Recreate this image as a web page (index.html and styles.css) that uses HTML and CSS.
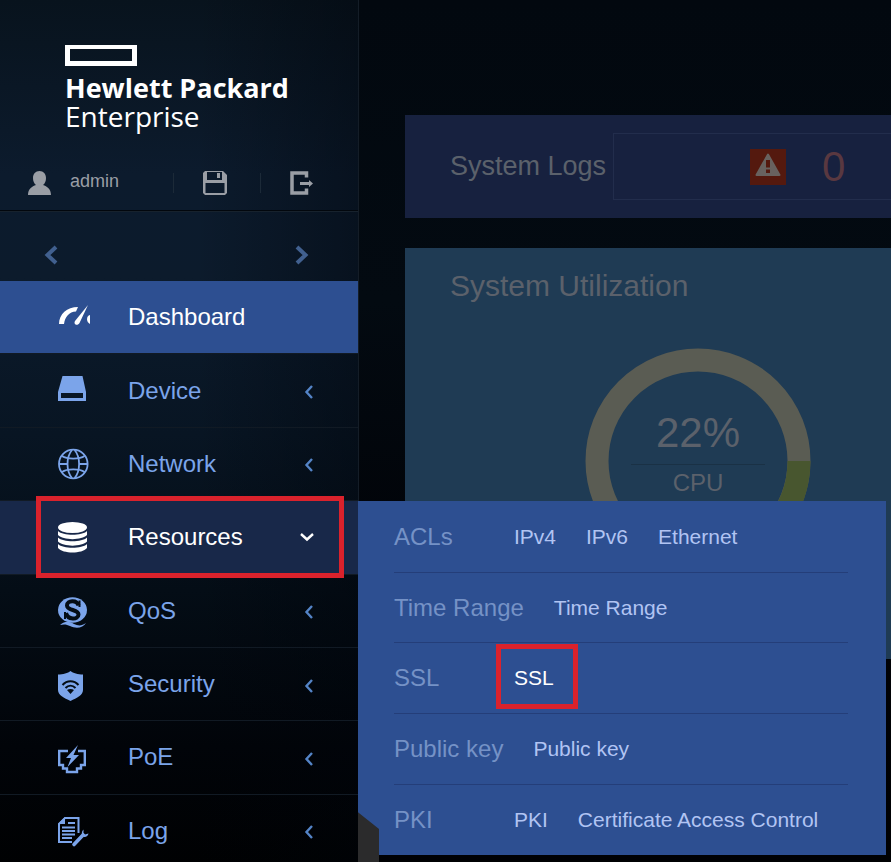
FILE: index.html
```html
<!DOCTYPE html>
<html lang="en">
<head>
    <meta charset="UTF-8">
    <meta name="viewport" content="width=device-width, initial-scale=1.0">
    <title>Hewlett Packard Enterprise</title>
    <link rel="stylesheet" href="styles.css">
</head>
<body>
    <div class="shell">
        <aside class="sidebar">
            <header class="sidebar-header">
                <div class="logo">
                    <div class="logo-box"></div>
                    <div class="logo-name">Hewlett Packard</div>
                    <div class="logo-sub">Enterprise</div>
                </div>
                <div class="user-bar">
                    <svg class="user-icon" viewBox="0 0 24 24">
                        <path d="M11.500 0C15.500 0 18 3 18 7C18 10 17 12.500 15 14C19 15.500 23 18 23 24H0C0 18 4 15.500 8 14C6 12.500 5 10 5 7C5 3 7.500 0 11.500 0Z" fill="currentColor"/>
                    </svg>
                    <span class="user-name">admin</span>
                    <button class="tool" type="button" aria-label="Save">
                        <svg viewBox="0 0 24 24">
                            <path fill-rule="evenodd" d="M2 0H20L24 4V22L22 24H2L0 22V2ZM4 1V9H19V1ZM14 2H17V7H14ZM2.500 12V22H21.500V12Z" fill="currentColor"/>
                        </svg>
                    </button>
                    <button class="tool" type="button" aria-label="Log out">
                        <svg viewBox="0 0 24 24">
                            <path d="M16.500 6.500V2H2V22H16.500V17.500" fill="none" stroke="currentColor" stroke-width="3.500"/>
                            <path d="M10 11H19V9L23 12.500L19 16V14H10Z" fill="currentColor"/>
                        </svg>
                    </button>
                </div>
            </header>

            <div class="pager">
                <button class="pager-btn" type="button" aria-label="Previous">
                    <svg viewBox="0 0 14 20"><path d="M12 2L3.500 10L12 18" fill="none" stroke="currentColor" stroke-width="4"/></svg>
                </button>
                <button class="pager-btn" type="button" aria-label="Next">
                    <svg viewBox="0 0 14 20"><path d="M2 2L10.500 10L2 18" fill="none" stroke="currentColor" stroke-width="4"/></svg>
                </button>
            </div>

            <nav>
                <ul class="menu">
                    <li class="menu-item active">
                        <a class="menu-link" href="#">
                            <svg class="menu-icon" viewBox="0 0 32 32">
                                <path d="M1 23C1 13 9 6 20 6L18 10.500C11 11 7 15.500 6 23Z" fill="currentColor"/>
                                <path d="M30 4L21.500 22C20 25 15 24 17 20Z" fill="currentColor"/>
                                <path d="M32 14C28 15 28 21 32 23Z" fill="currentColor"/>
                            </svg>
                            <span class="menu-label">Dashboard</span>
                        </a>
                    </li>
                    <li class="menu-item">
                        <a class="menu-link" href="#">
                            <svg class="menu-icon" viewBox="0 0 32 32">
                                <path fill-rule="evenodd" d="M4.500 1H24.500L28 17V26H0V17ZM3 18V23H25V18Z" fill="currentColor"/>
                            </svg>
                            <span class="menu-label">Device</span>
                            <svg class="menu-arrow" viewBox="0 0 14 14"><path d="M12 1L6.500 7L12 13" fill="none" stroke="currentColor" stroke-width="2.400"/></svg>
                        </a>
                    </li>
                    <li class="menu-item">
                        <a class="menu-link" href="#">
                            <svg class="menu-icon" viewBox="0 0 32 32">
                                <g fill="none" stroke="currentColor" stroke-width="1.800">
                                    <circle cx="15.300" cy="16" r="14.300"/>
                                    <path d="M14 2C8 9 8 23 14 30M16.600 2C22.600 9 22.600 23 16.600 30"/>
                                    <path d="M4 8C9 11.500 21.600 11.500 26.600 8M4 24C9 20.500 21.600 20.500 26.600 24M1 16H9.500M21 16H29.600"/>
                                </g>
                            </svg>
                            <span class="menu-label">Network</span>
                            <svg class="menu-arrow" viewBox="0 0 14 14"><path d="M12 1L6.500 7L12 13" fill="none" stroke="currentColor" stroke-width="2.400"/></svg>
                        </a>
                    </li>
                    <li class="menu-item open marked">
                        <a class="menu-link" href="#">
                            <svg class="menu-icon" viewBox="0 0 32 32">
                                <ellipse cx="14.500" cy="6.500" rx="14.500" ry="5.500" fill="currentColor"/>
                                <path d="M0 10C5 15 24 15 29 10V14C24 19.500 5 19.500 0 14ZM0 16.500C5 21.500 24 21.500 29 16.500V20.500C24 26 5 26 0 20.500ZM0 23C5 28 24 28 29 23V27C24 33 5 33 0 27Z" fill="currentColor"/>
                            </svg>
                            <span class="menu-label">Resources</span>
                            <svg class="menu-arrow" viewBox="0 0 14 14"><path d="M1 4L7 9.500L13 4" fill="none" stroke="currentColor" stroke-width="2.400"/></svg>
                        </a>
                        <div class="flyout">
                            <div class="flyout-row">
                                <span class="flyout-title">ACLs</span>
                                <a class="flyout-link" href="#">IPv4</a>
                                <a class="flyout-link" href="#">IPv6</a>
                                <a class="flyout-link" href="#">Ethernet</a>
                            </div>
                            <div class="flyout-row">
                                <span class="flyout-title">Time Range</span>
                                <a class="flyout-link" href="#">Time Range</a>
                            </div>
                            <div class="flyout-row">
                                <span class="flyout-title">SSL</span>
                                <a class="flyout-link current" href="#">SSL</a>
                            </div>
                            <div class="flyout-row">
                                <span class="flyout-title">Public key</span>
                                <a class="flyout-link" href="#">Public key</a>
                            </div>
                            <div class="flyout-row">
                                <span class="flyout-title">PKI</span>
                                <a class="flyout-link" href="#">PKI</a>
                                <a class="flyout-link" href="#">Certificate Access Control</a>
                            </div>
                        </div>
                    </li>
                    <li class="menu-item">
                        <a class="menu-link" href="#">
                            <svg class="menu-icon" viewBox="0 0 32 32">
                                <ellipse cx="14.500" cy="15" rx="14.500" ry="12.800" fill="currentColor"/>
                                <path d="M2 30C7 26 11 26 16 29C20 31 24 31 28 28C25 33 18 34 12 31C9 29.500 6 29 2 30Z" fill="currentColor"/>
                                <path d="M20.500 10.500C19 4.500 9 5 9 10.500C9 16 20.500 14 20.500 19.500C20.500 25 9.500 25 8 18" fill="none" stroke="#040d16" stroke-width="4"/>
                                <path d="M20.500 5.500H22.500V12H20.500ZM6 17H8V24H6Z" fill="#040d16"/>
                            </svg>
                            <span class="menu-label">QoS</span>
                            <svg class="menu-arrow" viewBox="0 0 14 14"><path d="M12 1L6.500 7L12 13" fill="none" stroke="currentColor" stroke-width="2.400"/></svg>
                        </a>
                    </li>
                    <li class="menu-item">
                        <a class="menu-link" href="#">
                            <svg class="menu-icon" viewBox="0 0 32 32">
                                <path d="M12.500 3C15 5 20 6.500 25 6.500V22C25 27 19 30 12.500 33C6 30 0 27 0 22V6.500C5 6.500 10 5 12.500 3Z" fill="currentColor"/>
                                <path d="M4.500 17C9 12 16 12 20.500 17M7.500 20C10.500 17 14.500 17 17.500 20" fill="none" stroke="#040d16" stroke-width="2"/>
                                <path d="M9 22C11 20.500 14 20.500 16 22L12.500 26Z" fill="#040d16"/>
                            </svg>
                            <span class="menu-label">Security</span>
                            <svg class="menu-arrow" viewBox="0 0 14 14"><path d="M12 1L6.500 7L12 13" fill="none" stroke="currentColor" stroke-width="2.400"/></svg>
                        </a>
                    </li>
                    <li class="menu-item">
                        <a class="menu-link" href="#">
                            <svg class="menu-icon" viewBox="0 0 32 32">
                                <path d="M10 10H1.200V24H5V27.500H9V31H19V27.500H23V24H26.800V10H20" fill="none" stroke="currentColor" stroke-width="2.400"/>
                                <path d="M20 4L8 17H13L9.500 26L21 14H15.500Z" fill="currentColor"/>
                            </svg>
                            <span class="menu-label">PoE</span>
                            <svg class="menu-arrow" viewBox="0 0 14 14"><path d="M12 1L6.500 7L12 13" fill="none" stroke="currentColor" stroke-width="2.400"/></svg>
                        </a>
                    </li>
                    <li class="menu-item">
                        <a class="menu-link" href="#">
                            <svg class="menu-icon" viewBox="0 0 32 32">
                                <path d="M20.500 18V3H7L1 9V27H14" fill="none" stroke="currentColor" stroke-width="2"/>
                                <path d="M7 2V9H0Z" fill="currentColor"/>
                                <path d="M10 8H17M4 12.500H17M4 16H17M4 19.500H17M4 23H14" stroke="currentColor" stroke-width="1.800"/>
                                <path d="M16 29.500L25 20" stroke="currentColor" stroke-width="3.600" stroke-linecap="round"/>
                                <path d="M25.500 14.500C23 17 23.500 21 26 22C28 22.500 30 21 30.500 18.500L27 19.500L25.500 18Z" fill="currentColor"/>
                            </svg>
                            <span class="menu-label">Log</span>
                            <svg class="menu-arrow" viewBox="0 0 14 14"><path d="M12 1L6.500 7L12 13" fill="none" stroke="currentColor" stroke-width="2.400"/></svg>
                        </a>
                    </li>
                </ul>
            </nav>
        </aside>

        <main class="content">
            <section class="card logs">
                <h2 class="logs-title">System Logs</h2>
                <div class="logs-box">
                    <svg class="alert-icon" viewBox="0 0 36 36">
                        <rect width="36" height="36" fill="#54190e"/>
                        <path d="M18 5.500L29.500 26H6.500Z" fill="#68625f" stroke="#68625f" stroke-width="2" stroke-linejoin="round"/>
                        <path d="M16 11H20V18.500H16ZM16 20.500H20V24H16Z" fill="#54190e"/>
                    </svg>
                    <span class="logs-count">0</span>
                </div>
            </section>
            <section class="card utilization">
                <h2 class="utilization-title">System Utilization</h2>
                <div class="gauge">
                    <svg class="gauge-ring" viewBox="0 0 226 226">
                        <circle cx="113" cy="113" r="101" fill="none" stroke="#5a5c53" stroke-width="23"/>
                        <circle cx="113" cy="113" r="101" fill="none" stroke="#48562f" stroke-width="23" pathLength="100" stroke-dasharray="22 78"/>
                    </svg>
                    <div class="gauge-text">
                        <span class="gauge-value">22%</span>
                        <span class="gauge-name">CPU</span>
                    </div>
                </div>
            </section>
        </main>
    </div>
</body>
</html>
```
FILE: styles.css
```css
* {
    box-sizing: border-box;
}
body {
    margin: 0;
    font-family: "Liberation Sans", Arial, sans-serif;
    background-color: #010409;
    overflow: hidden;
}
a {
    text-decoration: none;
}
button {
    padding: 0;
    border: none;
    background: none;
    cursor: pointer;
}
h2 {
    margin: 0;
    font-weight: normal;
}
svg {
    display: block;
    overflow: visible;
}
.shell {
    display: flex;
    height: 100vh;
    background: linear-gradient(180deg, #02080f 0%, #030a11 35%, #010308 65%, #000103 100%);
}

/* sidebar */
.sidebar {
    position: relative;
    z-index: 1;
    flex: 0 0 359px;
    min-height: 868px;
    border-right: 1px solid #141d27;
    background: linear-gradient(90deg, transparent 55%, rgba(0, 4, 10, 0.4) 100%),
        linear-gradient(180deg, #08131d 0%, #0c1b2d 20%, #0c1b2c 32%, #081523 50%, #040d16 68%, #010409 86%, #000102 100%);
}
.sidebar-header {
    height: 212px;
    padding-top: 45px;
    border-bottom: 1px solid #17222d;
    box-shadow: inset 0 -1px 0 #02070d;
}
.logo {
    height: 126px;
    padding-left: 65px;
    color: #ffffff;
    font-family: "Open Sans", "Noto Sans", sans-serif;
    line-height: 29px;
    white-space: nowrap;
}
.logo-box {
    width: 72px;
    height: 21px;
    margin-bottom: 7px;
    border: 5px solid #ffffff;
    border-top-width: 4px;
}
.logo-name {
    font-size: 27px;
    font-weight: 700;
}
.logo-sub {
    font-size: 28px;
    font-weight: 500;
}
.user-bar {
    display: flex;
    align-items: center;
    height: 24px;
    padding-left: 28px;
    color: #9a9ea5;
}
.user-icon {
    width: 24px;
    height: 24px;
    margin-right: 18px;
}
.user-name {
    width: 103px;
    padding-bottom: 4px;
    font-size: 18px;
    line-height: 20px;
}
.tool {
    display: flex;
    align-items: center;
    width: 87px;
    height: 20px;
    padding-left: 29px;
    border-left: 1px solid #1c2a38;
    color: #9a9ea5;
}
.tool svg {
    width: 24px;
    height: 24px;
}
.pager {
    display: flex;
    justify-content: space-between;
    align-items: center;
    height: 69px;
    padding: 16px 49px 0 44px;
}
.pager-btn {
    width: 14px;
    height: 20px;
    color: #41608f;
}
.menu {
    display: grid;
    grid-auto-rows: 1fr;
    min-height: 587px;
    margin: 0;
    padding: 0;
    list-style: none;
}
.menu-item {
    position: relative;
    border-bottom: 1px solid #111a24;
}
.menu-link {
    display: flex;
    align-items: center;
    height: 100%;
    padding: 0 44px 0 58px;
    color: #7ba4ea;
    font-size: 24px;
}
.menu-icon {
    width: 32px;
    height: 32px;
    margin-right: 38px;
}
.menu-label {
    flex: 1;
}
.menu-arrow {
    width: 14px;
    height: 14px;
    margin-top: 3px;
    color: #5484c7;
}
.active {
    background-color: #2d4f91;
}
.open {
    background-color: #182849;
}
.active .menu-link,
.open .menu-link,
.open .menu-arrow {
    color: #ffffff;
}
.open .menu-arrow {
    margin-top: 0;
}
.marked::after {
    content: "";
    position: absolute;
    inset: -5px 14px -4px 36px;
    border: 5px solid #da222c;
    pointer-events: none;
}

/* submenu */
.flyout {
    position: absolute;
    top: 0;
    left: 100%;
    display: grid;
    grid-auto-rows: 1fr;
    width: 528px;
    min-height: 354px;
    padding: 1px 38px 0 36px;
    background-color: #2d4f91;
}
.flyout::after {
    content: "";
    position: absolute;
    left: 0;
    bottom: -17px;
    width: 21px;
    height: 60px;
    background-color: #2b2b2c;
    clip-path: polygon(0 0, 100% 28%, 100% 100%, 0 100%);
}
.flyout-row {
    display: flex;
    align-items: center;
    gap: 30px;
    border-bottom: 1px solid #243e79;
    white-space: nowrap;
}
.flyout-row:last-child {
    border-bottom: none;
}
.flyout-title {
    min-width: 90px;
    color: #7592c6;
    font-size: 24px;
}
.flyout-link {
    position: relative;
    color: #b1c4f3;
    font-size: 21px;
    line-height: 24px;
}
.flyout-link.current {
    color: #ffffff;
}
.flyout-link.current::after {
    content: "";
    position: absolute;
    inset: -22px -24px -19px -18px;
    border: 5px solid #da222c;
}

/* dashboard behind the menu */
.content {
    flex: 1;
    min-width: 0;
    padding: 115px 0 0 46px;
    color: #5b616b;
}
.card {
    margin-bottom: 30px;
    overflow: hidden;
}
.logs {
    display: flex;
    align-items: center;
    padding: 18px 0 18px 45px;
    background-color: #17213f;
}
.logs-title {
    flex: 0 0 163px;
    font-size: 27px;
}
.logs-box {
    display: flex;
    flex: 1;
    align-items: center;
    gap: 36px;
    height: 67px;
    padding-left: 136px;
    border: 1px solid #222d4c;
    border-right: none;
}
.alert-icon {
    width: 36px;
    height: 36px;
}
.logs-count {
    color: #593840;
    font-size: 42px;
}
.utilization {
    height: 411px;
    padding: 20px 0 0 45px;
    background-color: #1f3b54;
}
.utilization-title {
    font-size: 30px;
    line-height: 36px;
}
.gauge {
    display: grid;
    width: 226px;
    margin: 44px 0 0 135px;
}
.gauge-ring,
.gauge-text {
    grid-area: 1 / 1;
}
.gauge-ring {
    width: 226px;
    height: 226px;
}
.gauge-text {
    display: flex;
    flex-direction: column;
    align-items: center;
    padding-top: 61px;
}
.gauge-value {
    width: 134px;
    padding-bottom: 7px;
    border-bottom: 1px solid #1a3145;
    font-size: 42px;
    line-height: 48px;
    text-align: center;
}
.gauge-name {
    margin-top: 4px;
    font-size: 24px;
    line-height: 28px;
}
```
